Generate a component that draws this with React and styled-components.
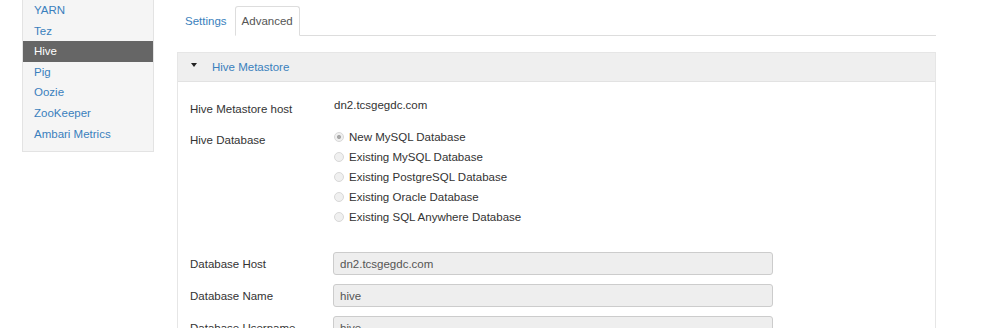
import React from "react"
import styled, { createGlobalStyle } from "styled-components"

const GlobalStyle = createGlobalStyle`
  body {
    margin: 0;
    background: #fff;
    font-family: "Liberation Sans", Arial, sans-serif;
    font-size: 11.5px;
    color: #333;
  }
`

const services = ["YARN", "Tez", "Hive", "Pig", "Oozie", "ZooKeeper", "Ambari Metrics"]
const databases = [
  "New MySQL Database",
  "Existing MySQL Database",
  "Existing PostgreSQL Database",
  "Existing Oracle Database",
  "Existing SQL Anywhere Database",
]

function App() {
  return (
    <>
      <GlobalStyle />
      <Page>
        <Sidebar>
          {services.map((s) => (
            <NavItem key={s} active={s === "Hive"}>
              {s}
            </NavItem>
          ))}
        </Sidebar>
        <Main>
          <Tabs>
            <Tab>Settings</Tab>
            <Tab active>Advanced</Tab>
          </Tabs>
          <Panel>
            <PanelHeader>
              <Caret />
              <PanelTitle>Hive Metastore</PanelTitle>
            </PanelHeader>
            <PanelBody>
              <Row>
                <Label>Hive Metastore host</Label>
                <Value>dn2.tcsgegdc.com</Value>
              </Row>
              <Row>
                <Label>Hive Database</Label>
                <RadioList>
                  {databases.map((d, i) => (
                    <RadioItem key={d}>
                      <Radio checked={i === 0} />
                      {d}
                    </RadioItem>
                  ))}
                </RadioList>
              </Row>
              <Fields>
                <FieldRow>
                  <Label>Database Host</Label>
                  <Input readOnly value="dn2.tcsgegdc.com" />
                </FieldRow>
                <FieldRow>
                  <Label>Database Name</Label>
                  <Input readOnly value="hive" />
                </FieldRow>
                <FieldRow>
                  <Label>Database Username</Label>
                  <Input readOnly value="hive" />
                </FieldRow>
              </Fields>
            </PanelBody>
          </Panel>
        </Main>
      </Page>
    </>
  )
}

export default App

const Page = styled.div`
  display: flex;
  align-items: flex-start;
  padding-left: 22px;
  height: 328px;
  overflow: hidden;
`

const Sidebar = styled.div`
  width: 130px;
  flex-shrink: 0;
  background: #f5f5f5;
  border: 1px solid #e3e3e3;
  border-top: none;
  padding: 0 0 7px;
`

const NavItem = styled.div`
  height: 20.6px;
  line-height: 20.6px;
  padding-left: 11px;
  font-size: 11.5px;
  color: ${(p) => (p.active ? "#fff" : "#3a7fbd")};
  background: ${(p) => (p.active ? "#666" : "transparent")};
`

const Main = styled.div`
  margin-left: 23px;
  width: 759px;
  flex-shrink: 0;
`

const Tabs = styled.div`
  display: flex;
  padding: 6px 0 0 0;
  border-bottom: 1px solid #ddd;
`

const Tab = styled.div`
  height: 28px;
  line-height: 28px;
  padding: 0 ${(p) => (p.active ? "6px" : "7px")};
  margin: 0 0 -1px 0;
  font-size: 11.5px;
  color: ${(p) => (p.active ? "#555" : "#3a7fbd")};
  background: #fff;
  border: 1px solid ${(p) => (p.active ? "#ddd" : "transparent")};
  border-bottom-color: ${(p) => (p.active ? "#fff" : "transparent")};
  border-radius: 3px 3px 0 0;
`

const Panel = styled.div`
  margin-top: 16px;
  border: 1px solid #e6e6e6;
  border-bottom: none;
`

const PanelHeader = styled.div`
  display: flex;
  align-items: center;
  height: 28px;
  padding-left: 13px;
  background: #efefef;
  border-bottom: 1px solid #e2e2e2;
`

const Caret = styled.span`
  width: 0;
  height: 0;
  border-left: 3.5px solid transparent;
  border-right: 3.5px solid transparent;
  border-top: 4px solid #222;
  margin: -4px 15px 0 0;
`

const PanelTitle = styled.span`
  color: #3a7fbd;
  font-size: 11.5px;
`

const PanelBody = styled.div`
  padding: 14px 12px 0;
`

const Row = styled.div`
  display: grid;
  grid-template-columns: 144px 1fr;
  margin-bottom: 8px;
`

const Label = styled.div`
  font-size: 11.5px;
  color: #333;
  line-height: 20px;
  padding-top: 3px;
`

const Value = styled.div`
  font-size: 11.5px;
  color: #333;
  line-height: 20px;
  margin-top: -1px;
`

const RadioList = styled.div`
  display: flex;
  flex-direction: column;
`

const RadioItem = styled.div`
  display: flex;
  align-items: center;
  height: 20px;
  font-size: 11.5px;
  color: #333;
`

const Radio = styled.span`
  width: 8px;
  height: 8px;
  border-radius: 50%;
  border: 1px solid #d8d8d8;
  background: ${(p) =>
    p.checked
      ? "radial-gradient(circle, #a8a8a8 0 1.8px, #f0f0f0 2.3px)"
      : "#f0f0f0"};
  margin: 0 5px 0 0;
  flex-shrink: 0;
`

const Fields = styled.div`
  display: flex;
  flex-direction: column;
  gap: 9px;
  margin-top: 25px;
`

const FieldRow = styled.div`
  display: grid;
  grid-template-columns: 143px 440px;
  align-items: center;
  ${Label} {
    padding-top: 0;
  }
`

const Input = styled.input`
  box-sizing: border-box;
  height: 23px;
  width: 440px;
  padding: 0 6px;
  font-family: "Liberation Sans", Arial, sans-serif;
  font-size: 11.5px;
  color: #555;
  background: #eee;
  border: 1px solid #ccc;
  border-radius: 3px;
  outline: none;
`
